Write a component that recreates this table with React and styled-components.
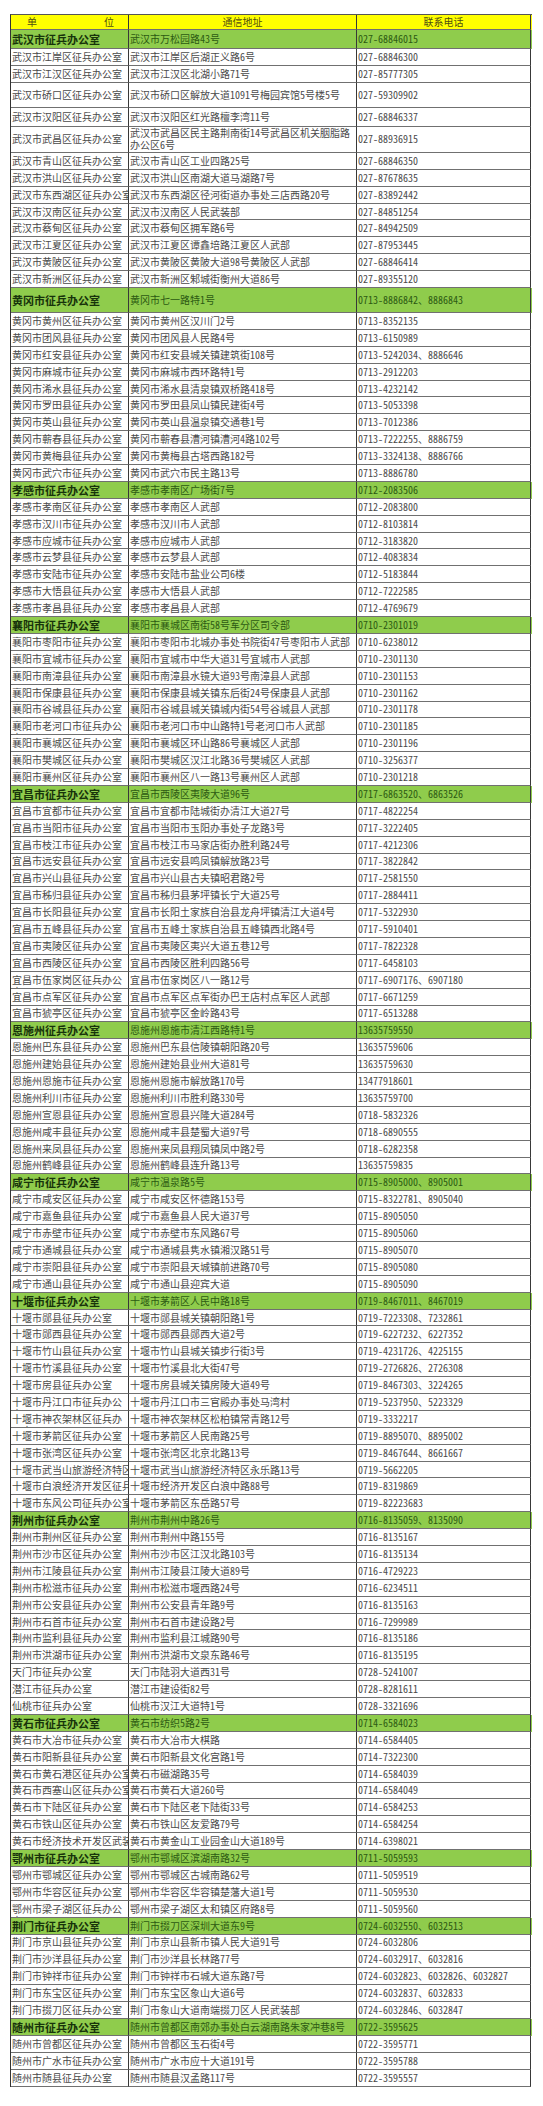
import React from "react";
import styled, { createGlobalStyle } from "styled-components";

const FONT = `"Noto Sans Mono CJK SC", "Noto Sans CJK SC", monospace`;

const GlobalStyle = createGlobalStyle`
  html, body {
    margin: 0;
    padding: 0;
    background: #fff;
  }
  body {
    font-family: ${FONT};
  }
`;

// unit | address | phone | flags (g: section head in green, h: row height, wu/wa: wraps)
const ROWS = [
  ["武汉市征兵办公室", "武汉市万松园路43号", "027-68846015", { g: 1, h: 19 }],
  ["武汉市江岸区征兵办公室", "武汉市江岸区后湖正义路6号", "027-68846300"],
  ["武汉市江汉区征兵办公室", "武汉市江汉区北湖小路71号", "027-85777305"],
  ["武汉市硚口区征兵办公室", "武汉市硚口区解放大道1091号梅园宾馆5号楼5号", "027-59309902", { h: 25 }],
  ["武汉市汉阳区征兵办公室", "武汉市汉阳区红光路檀李湾11号", "027-68846337", { h: 19 }],
  ["武汉市武昌区征兵办公室", "武汉市武昌区民主路荆南街14号武昌区机关胭脂路办公区6号", "027-88936915", { h: 26, wa: 1 }],
  ["武汉市青山区征兵办公室", "武汉市青山区工业四路25号", "027-68846350", { h: 17 }],
  ["武汉市洪山区征兵办公室", "武汉市洪山区南湖大道马湖路7号", "027-87678635"],
  ["武汉市东西湖区征兵办公室", "武汉市东西湖区径河街道办事处三店西路20号", "027-83892442"],
  ["武汉市汉南区征兵办公室", "武汉市汉南区人民武装部", "027-84851254"],
  ["武汉市蔡甸区征兵办公室", "武汉市蔡甸区拥军路6号", "027-84942509"],
  ["武汉市江夏区征兵办公室", "武汉市江夏区谭鑫培路江夏区人武部", "027-87953445"],
  ["武汉市黄陂区征兵办公室", "武汉市黄陂区黄陂大道98号黄陂区人武部", "027-68846414"],
  ["武汉市新洲区征兵办公室", "武汉市新洲区邾城街衡州大道86号", "027-89355120"],

  ["黄冈市征兵办公室", "黄冈市七一路特1号", "0713-8886842、8886843", { g: 1, h: 25 }],
  ["黄冈市黄州区征兵办公室", "黄冈市黄州区汉川门2号", "0713-8352135"],
  ["黄冈市团风县征兵办公室", "黄冈市团风县人民路4号", "0713-6150989"],
  ["黄冈市红安县征兵办公室", "黄冈市红安县城关镇建筑街108号", "0713-5242034、8886646"],
  ["黄冈市麻城市征兵办公室", "黄冈市麻城市西环路特1号", "0713-2912203"],
  ["黄冈市浠水县征兵办公室", "黄冈市浠水县清泉镇双桥路418号", "0713-4232142"],
  ["黄冈市罗田县征兵办公室", "黄冈市罗田县凤山镇民建街4号", "0713-5053398"],
  ["黄冈市英山县征兵办公室", "黄冈市英山县温泉镇交通巷1号", "0713-7012386"],
  ["黄冈市蕲春县征兵办公室", "黄冈市蕲春县漕河镇漕河4路102号", "0713-7222255、8886759"],
  ["黄冈市黄梅县征兵办公室", "黄冈市黄梅县古塔西路182号", "0713-3324138、8886766"],
  ["黄冈市武穴市征兵办公室", "黄冈市武穴市民主路13号", "0713-8886780"],

  ["孝感市征兵办公室", "孝感市孝南区广场街7号", "0712-2083506", { g: 1 }],
  ["孝感市孝南区征兵办公室", "孝感市孝南区人武部", "0712-2083800"],
  ["孝感市汉川市征兵办公室", "孝感市汉川市人武部", "0712-8103814"],
  ["孝感市应城市征兵办公室", "孝感市应城市人武部", "0712-3183820"],
  ["孝感市云梦县征兵办公室", "孝感市云梦县人武部", "0712-4083834"],
  ["孝感市安陆市征兵办公室", "孝感市安陆市盐业公司6楼", "0712-5183844"],
  ["孝感市大悟县征兵办公室", "孝感市大悟县人武部", "0712-7222585"],
  ["孝感市孝昌县征兵办公室", "孝感市孝昌县人武部", "0712-4769679"],

  ["襄阳市征兵办公室", "襄阳市襄城区南街58号军分区司令部", "0710-2301019", { g: 1 }],
  ["襄阳市枣阳市征兵办公室", "襄阳市枣阳市北城办事处书院街47号枣阳市人武部", "0710-6238012"],
  ["襄阳市宜城市征兵办公室", "襄阳市宜城市中华大道31号宜城市人武部", "0710-2301130"],
  ["襄阳市南漳县征兵办公室", "襄阳市南漳县水镜大道93号南漳县人武部", "0710-2301153"],
  ["襄阳市保康县征兵办公室", "襄阳市保康县城关镇东后街24号保康县人武部", "0710-2301162"],
  ["襄阳市谷城县征兵办公室", "襄阳市谷城县城关镇城内街54号谷城县人武部", "0710-2301178"],
  ["襄阳市老河口市征兵办公室", "襄阳市老河口市中山路特1号老河口市人武部", "0710-2301185", { wu: 1 }],
  ["襄阳市襄城区征兵办公室", "襄阳市襄城区环山路86号襄城区人武部", "0710-2301196"],
  ["襄阳市樊城区征兵办公室", "襄阳市樊城区汉江北路36号樊城区人武部", "0710-3256377"],
  ["襄阳市襄州区征兵办公室", "襄阳市襄州区八一路13号襄州区人武部", "0710-2301218"],

  ["宜昌市征兵办公室", "宜昌市西陵区夷陵大道96号", "0717-6863520、6863526", { g: 1 }],
  ["宜昌市宜都市征兵办公室", "宜昌市宜都市陆城街办清江大道27号", "0717-4822254"],
  ["宜昌市当阳市征兵办公室", "宜昌市当阳市玉阳办事处子龙路3号", "0717-3222405"],
  ["宜昌市枝江市征兵办公室", "宜昌市枝江市马家店街办胜利路24号", "0717-4212306"],
  ["宜昌市远安县征兵办公室", "宜昌市远安县鸣凤镇解放路23号", "0717-3822842"],
  ["宜昌市兴山县征兵办公室", "宜昌市兴山县古夫镇昭君路2号", "0717-2581550"],
  ["宜昌市秭归县征兵办公室", "宜昌市秭归县茅坪镇长宁大道25号", "0717-2884411"],
  ["宜昌市长阳县征兵办公室", "宜昌市长阳土家族自治县龙舟坪镇清江大道4号", "0717-5322930"],
  ["宜昌市五峰县征兵办公室", "宜昌市五峰土家族自治县五峰镇西北路4号", "0717-5910401"],
  ["宜昌市夷陵区征兵办公室", "宜昌市夷陵区夷兴大道五巷12号", "0717-7822328"],
  ["宜昌市西陵区征兵办公室", "宜昌市西陵区胜利四路56号", "0717-6458103"],
  ["宜昌市伍家岗区征兵办公室", "宜昌市伍家岗区八一路12号", "0717-6907176、6907180", { wu: 1 }],
  ["宜昌市点军区征兵办公室", "宜昌市点军区点军街办巴王店村点军区人武部", "0717-6671259"],
  ["宜昌市猇亭区征兵办公室", "宜昌市猇亭区金岭路43号", "0717-6513288"],

  ["恩施州征兵办公室", "恩施州恩施市清江西路特1号", "13635759550", { g: 1 }],
  ["恩施州巴东县征兵办公室", "恩施州巴东县信陵镇朝阳路20号", "13635759606"],
  ["恩施州建始县征兵办公室", "恩施州建始县业州大道81号", "13635759630"],
  ["恩施州恩施市征兵办公室", "恩施州恩施市解放路170号", "13477918601"],
  ["恩施州利川市征兵办公室", "恩施州利川市胜利路330号", "13635759700"],
  ["恩施州宣恩县征兵办公室", "恩施州宣恩县兴隆大道284号", "0718-5832326"],
  ["恩施州咸丰县征兵办公室", "恩施州咸丰县楚蜀大道97号", "0718-6890555"],
  ["恩施州来凤县征兵办公室", "恩施州来凤县翔凤镇凤中路2号", "0718-6282358"],
  ["恩施州鹤峰县征兵办公室", "恩施州鹤峰县连升路13号", "13635759835"],

  ["咸宁市征兵办公室", "咸宁市温泉路5号", "0715-8905000、8905001", { g: 1 }],
  ["咸宁市咸安区征兵办公室", "咸宁市咸安区怀德路153号", "0715-8322781、8905040"],
  ["咸宁市嘉鱼县征兵办公室", "咸宁市嘉鱼县人民大道37号", "0715-8905050"],
  ["咸宁市赤壁市征兵办公室", "咸宁市赤壁市东风路67号", "0715-8905060"],
  ["咸宁市通城县征兵办公室", "咸宁市通城县隽水镇湘汉路51号", "0715-8905070"],
  ["咸宁市崇阳县征兵办公室", "咸宁市崇阳县天城镇前进路70号", "0715-8905080"],
  ["咸宁市通山县征兵办公室", "咸宁市通山县迎宾大道", "0715-8905090"],

  ["十堰市征兵办公室", "十堰市茅箭区人民中路18号", "0719-8467011、8467019", { g: 1 }],
  ["十堰市郧县征兵办公室", "十堰市郧县城关镇朝阳路1号", "0719-7223308、7232861"],
  ["十堰市郧西县征兵办公室", "十堰市郧西县郧西大道2号", "0719-6227232、6227352"],
  ["十堰市竹山县征兵办公室", "十堰市竹山县城关镇步行街3号", "0719-4231726、4225155"],
  ["十堰市竹溪县征兵办公室", "十堰市竹溪县北大街47号", "0719-2726826、2726308"],
  ["十堰市房县征兵办公室", "十堰市房县城关镇房陵大道49号", "0719-8467303、3224265"],
  ["十堰市丹江口市征兵办公室", "十堰市丹江口市三官殿办事处马湾村", "0719-5237950、5223329", { wu: 1 }],
  ["十堰市神农架林区征兵办公室", "十堰市神农架林区松柏镇常青路12号", "0719-3332217", { wu: 1 }],
  ["十堰市茅箭区征兵办公室", "十堰市茅箭区人民南路25号", "0719-8895070、8895002"],
  ["十堰市张湾区征兵办公室", "十堰市张湾区北京北路13号", "0719-8467644、8661667"],
  ["十堰市武当山旅游经济特区征兵办公室", "十堰市武当山旅游经济特区永乐路13号", "0719-5662205"],
  ["十堰市白浪经济开发区征兵办公室", "十堰市经济开发区白浪中路88号", "0719-8319869"],
  ["十堰市东风公司征兵办公室", "十堰市茅箭区东岳路57号", "0719-82223683"],

  ["荆州市征兵办公室", "荆州市荆州中路26号", "0716-8135059、8135090", { g: 1 }],
  ["荆州市荆州区征兵办公室", "荆州市荆州中路155号", "0716-8135167"],
  ["荆州市沙市区征兵办公室", "荆州市沙市区江汉北路103号", "0716-8135134"],
  ["荆州市江陵县征兵办公室", "荆州市江陵县江陵大道89号", "0716-4729223"],
  ["荆州市松滋市征兵办公室", "荆州市松滋市堰西路24号", "0716-6234511"],
  ["荆州市公安县征兵办公室", "荆州市公安县青年路9号", "0716-8135163"],
  ["荆州市石首市征兵办公室", "荆州市石首市建设路2号", "0716-7299989"],
  ["荆州市监利县征兵办公室", "荆州市监利县江城路90号", "0716-8135186"],
  ["荆州市洪湖市征兵办公室", "荆州市洪湖市文泉东路46号", "0716-8135195"],
  ["天门市征兵办公室", "天门市陆羽大道西31号", "0728-5241007"],
  ["潜江市征兵办公室", "潜江市建设街82号", "0728-8281611"],
  ["仙桃市征兵办公室", "仙桃市汉江大道特1号", "0728-3321696"],

  ["黄石市征兵办公室", "黄石市纺织5路2号", "0714-6584023", { g: 1 }],
  ["黄石市大冶市征兵办公室", "黄石市大冶市大棋路", "0714-6584405"],
  ["黄石市阳新县征兵办公室", "黄石市阳新县文化宫路1号", "0714-7322300"],
  ["黄石市黄石港区征兵办公室", "黄石市磁湖路35号", "0714-6584039"],
  ["黄石市西塞山区征兵办公室", "黄石市黄石大道260号", "0714-6584049"],
  ["黄石市下陆区征兵办公室", "黄石市下陆区老下陆街33号", "0714-6584253"],
  ["黄石市铁山区征兵办公室", "黄石市铁山区友爱路79号", "0714-6584254"],
  ["黄石市经济技术开发区武装部", "黄石市黄金山工业园金山大道189号", "0714-6398021"],

  ["鄂州市征兵办公室", "鄂州市鄂城区滨湖南路32号", "0711-5059593", { g: 1 }],
  ["鄂州市鄂城区征兵办公室", "鄂州市鄂城区古城南路62号", "0711-5059519"],
  ["鄂州市华容区征兵办公室", "鄂州市华容区华容镇楚藩大道1号", "0711-5059530"],
  ["鄂州市梁子湖区征兵办公室", "鄂州市梁子湖区太和镇区府路8号", "0711-5059560", { wu: 1 }],

  ["荆门市征兵办公室", "荆门市掇刀区深圳大道东9号", "0724-6032550、6032513", { g: 1 }],
  ["荆门市京山县征兵办公室", "荆门市京山县新市镇人民大道91号", "0724-6032806"],
  ["荆门市沙洋县征兵办公室", "荆门市沙洋县长林路77号", "0724-6032917、6032816"],
  ["荆门市钟祥市征兵办公室", "荆门市钟祥市石城大道东路7号", "0724-6032823、6032826、6032827"],
  ["荆门市东宝区征兵办公室", "荆门市东宝区象山大道6号", "0724-6032837、6032833"],
  ["荆门市掇刀区征兵办公室", "荆门市象山大道南端掇刀区人民武装部", "0724-6032846、6032847"],

  ["随州市征兵办公室", "随州市曾都区南郊办事处白云湖南路朱家冲巷8号", "0722-3595625", { g: 1 }],
  ["随州市曾都区征兵办公室", "随州市曾都区玉石街4号", "0722-3595771"],
  ["随州市广水市征兵办公室", "随州市广水市应十大道191号", "0722-3595788"],
  ["随州市随县征兵办公室", "随州市随县汉孟路117号", "0722-3595557"],
];

const Sheet = styled.div`
  margin: 14px 0 0 10px;
  width: 521px;
  border-top: 1px solid #555;
  border-left: 1px solid #333;
  font-family: ${FONT};
  font-size: 10px;
`;

const Row = styled.div`
  display: grid;
  grid-template-columns: 118px 228px 174px;
  height: ${(p) => p.$h}px;
  background: ${(p) =>
    p.$tone === "head" ? "#ffff00" : p.$tone === "green" ? "#8fcc4c" : "#fff"};
  color: ${(p) =>
    p.$tone === "head" ? "#50500f" : p.$tone === "green" ? "#2c5a12" : "#4a4a4a"};
`;

const Cell = styled.div`
  display: flex;
  align-items: ${(p) => (p.$top ? "flex-start" : "center")};
  padding: ${(p) => (p.$top ? "2px 0 0 1px" : "0 0 0 1px")};
  min-width: 0;
  overflow: hidden;
  white-space: ${(p) => (p.$wrap ? "normal" : "nowrap")};
  line-height: 12px;
  border-right: 1px solid #383838;
  border-bottom: 1px solid #707070;
  font-size: ${(p) => (p.$bold ? "11px" : "10px")};
  font-weight: ${(p) => (p.$bold ? 700 : 400)};
  color: ${(p) => (p.$bold ? "#17330a" : "inherit")};
`;

const HeadCell = styled(Cell)`
  justify-content: ${(p) => (p.$spread ? "space-between" : "center")};
  padding: ${(p) => (p.$spread ? "0 14px 0 16px" : "0")};
`;

function DataRow({ row }) {
  const [unit, addr, phone, flags = {}] = row;
  return (
    <Row $h={flags.h || 16.9} $tone={flags.g ? "green" : undefined}>
      <Cell $bold={!!flags.g} $wrap={!!flags.wu} $top={!!flags.wu}>
        {unit}
      </Cell>
      <Cell $wrap={!!flags.wa}>{addr}</Cell>
      <Cell>{phone}</Cell>
    </Row>
  );
}

export default function App() {
  return (
    <>
      <GlobalStyle />
      <Sheet>
        <Row $h={15} $tone="head">
          <HeadCell $spread>
            <span>单</span>
            <span>位</span>
          </HeadCell>
          <HeadCell>通信地址</HeadCell>
          <HeadCell>联系电话</HeadCell>
        </Row>
        {ROWS.map((row) => (
          <DataRow key={row[0]} row={row} />
        ))}
      </Sheet>
    </>
  );
}
